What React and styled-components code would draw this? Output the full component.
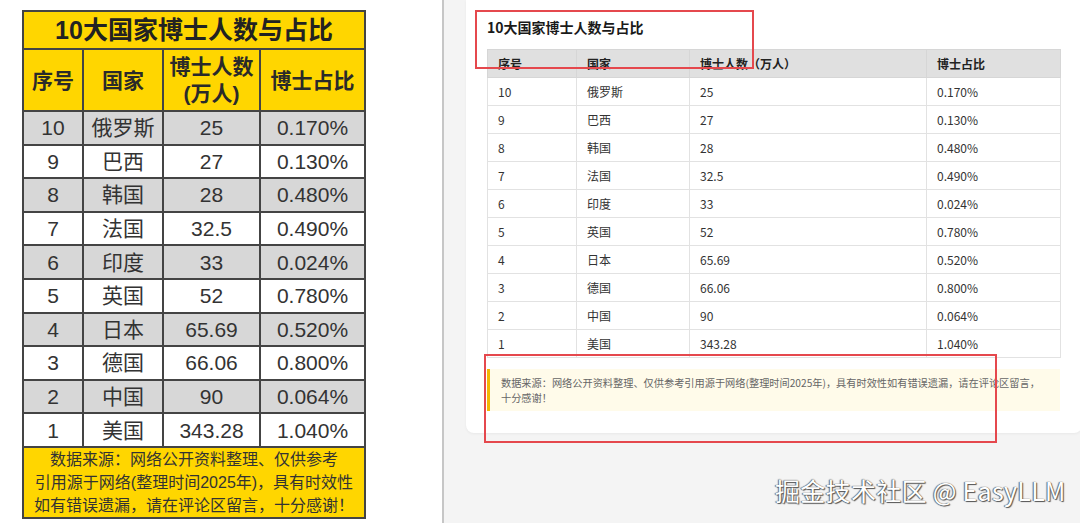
import styled, { createGlobalStyle } from "styled-components";

const GlobalStyle = createGlobalStyle`
  html, body {
    margin: 0;
    padding: 0;
  }
  body {
    font-family: "Noto Sans CJK SC", sans-serif;
    background: #f4f4f4;
  }
`;

const rows = [
  { rank: 10, country: "俄罗斯", count: "25", ratio: "0.170%" },
  { rank: 9, country: "巴西", count: "27", ratio: "0.130%" },
  { rank: 8, country: "韩国", count: "28", ratio: "0.480%" },
  { rank: 7, country: "法国", count: "32.5", ratio: "0.490%" },
  { rank: 6, country: "印度", count: "33", ratio: "0.024%" },
  { rank: 5, country: "英国", count: "52", ratio: "0.780%" },
  { rank: 4, country: "日本", count: "65.69", ratio: "0.520%" },
  { rank: 3, country: "德国", count: "66.06", ratio: "0.800%" },
  { rank: 2, country: "中国", count: "90", ratio: "0.064%" },
  { rank: 1, country: "美国", count: "343.28", ratio: "1.040%" },
];

const Page = styled.div`
  position: relative;
  display: flex;
  width: 1080px;
  height: 523px;
  overflow: hidden;
`;

/* left: the yellow poster image */
const PosterPane = styled.div`
  flex: none;
  width: 444px;
  box-sizing: border-box;
  padding: 10px 0 0 22px;
  background: #fff;
  border-right: 2px solid #c6c6c6;
  box-shadow: 2px 0 3px rgba(0, 0, 0, 0.06);
`;

const Poster = styled.table`
  width: 342px;
  border-collapse: collapse;
  table-layout: fixed;
  font-family: "Liberation Sans", "Noto Sans CJK SC", sans-serif;
  color: #333;
  text-align: center;
  border: 2px solid #3c3c3c;

  td,
  th {
    padding: 0;
    border: 2px solid #444;
  }
`;

const PosterTitle = styled.th`
  height: 36px;
  background: #ffd600;
  font-size: 25px;
  font-weight: 700;
  color: #222;
  line-height: 1;
`;

const PosterHead = styled.th`
  height: 60px;
  background: #ffd600;
  font-size: 21px;
  font-weight: 700;
  color: #2a2a2a;
  line-height: 27px;
`;

const PosterRow = styled.tr`
  background: ${(p) => (p.$shaded ? "#d7d7d7" : "#fff")};
`;

const PosterCell = styled.td`
  height: 31.6px;
  font-size: 21px;
  line-height: 1;
`;

const PosterNote = styled.td`
  height: 69px;
  background: #ffd600;
  font-size: 16px;
  line-height: 23px;
  color: #333;
`;

/* right: the web page screenshot */
const BrowserPane = styled.div`
  flex: 1;
  padding-left: 22px;
  background: #f4f4f4;
`;

const Card = styled.div`
  width: 616px;
  box-sizing: border-box;
  padding: 17px 22px 22px 21px;
  background: #fff;
  border-radius: 0 0 8px 8px;
  box-shadow: 0 1px 3px rgba(0, 0, 0, 0.05);
`;

const CardTitle = styled.h3`
  margin: 0 0 12px;
  font-size: 14px;
  line-height: 20px;
  font-weight: 700;
  color: #1a1a1a;
`;

const DataTable = styled.table`
  width: 573px;
  border-collapse: collapse;
  table-layout: fixed;
  font-size: 12px;
  color: #333;
  text-align: left;
  border: 1px solid #dadada;

  th,
  td {
    height: 27px;
    padding: 0 0 0 10px;
    border: 1px solid #e2e2e2;
  }

  th {
    background: #e0e0e0;
    font-weight: 700;
    color: #222;
    border-color: #d6d6d6;
  }
`;

const Note = styled.div`
  margin-top: 11px;
  padding: 6px 10px 5px 11px;
  border-left: 3px solid #f2b705;
  background: #fffbea;
  font-size: 10.2px;
  line-height: 15.3px;
  color: #666;
`;

const Annotation = styled.div`
  position: absolute;
  left: ${(p) => p.$x}px;
  top: ${(p) => p.$y}px;
  width: ${(p) => p.$w}px;
  height: ${(p) => p.$h}px;
  box-sizing: border-box;
  border: 2px solid #e5484d;
`;

const Watermark = styled.div`
  position: absolute;
  left: 775px;
  top: 474px;
  font-size: 25px;
  line-height: 32px;
  color: #fff;
  letter-spacing: 0.3px;
  text-shadow: 0 0 1px #444, 1px 1px 1px #555, -1px 0 1px #777;
`;

export default function App() {
  return (
    <>
      <GlobalStyle />
      <Page>
        <PosterPane>
          <Poster>
            <colgroup>
              <col style={{ width: 60 }} />
              <col style={{ width: 80 }} />
              <col style={{ width: 97 }} />
              <col style={{ width: 105 }} />
            </colgroup>
            <thead>
              <tr>
                <PosterTitle colSpan={4}>10大国家博士人数与占比</PosterTitle>
              </tr>
              <tr>
                <PosterHead>序号</PosterHead>
                <PosterHead>国家</PosterHead>
                <PosterHead>
                  博士人数
                  <br />
                  (万人)
                </PosterHead>
                <PosterHead>博士占比</PosterHead>
              </tr>
            </thead>
            <tbody>
              {rows.map((r, i) => (
                <PosterRow key={r.rank} $shaded={i % 2 === 0}>
                  <PosterCell>{r.rank}</PosterCell>
                  <PosterCell>{r.country}</PosterCell>
                  <PosterCell>{r.count}</PosterCell>
                  <PosterCell>{r.ratio}</PosterCell>
                </PosterRow>
              ))}
              <tr>
                <PosterNote colSpan={4}>
                  数据来源：网络公开资料整理、仅供参考
                  <br />
                  引用源于网络(整理时间2025年)，具有时效性
                  <br />
                  如有错误遗漏，请在评论区留言，十分感谢！
                </PosterNote>
              </tr>
            </tbody>
          </Poster>
        </PosterPane>

        <BrowserPane>
          <Card>
            <CardTitle>10大国家博士人数与占比</CardTitle>
            <DataTable>
              <colgroup>
                <col style={{ width: 89 }} />
                <col style={{ width: 113 }} />
                <col style={{ width: 237 }} />
                <col style={{ width: 134 }} />
              </colgroup>
              <thead>
                <tr>
                  <th>序号</th>
                  <th>国家</th>
                  <th>博士人数（万人）</th>
                  <th>博士占比</th>
                </tr>
              </thead>
              <tbody>
                {rows.map((r) => (
                  <tr key={r.rank}>
                    <td>{r.rank}</td>
                    <td>{r.country}</td>
                    <td>{r.count}</td>
                    <td>{r.ratio}</td>
                  </tr>
                ))}
              </tbody>
            </DataTable>
            <Note>
              数据来源：网络公开资料整理、仅供参考引用源于网络(整理时间2025年)，具有时效性如有错误遗漏，请在评论区留言，十分感谢！
            </Note>
          </Card>
        </BrowserPane>

        <Annotation $x={475} $y={10} $w={279} $h={59} />
        <Annotation $x={484} $y={354} $w={513} $h={89} />
        <Watermark>掘金技术社区 @ EasyLLM</Watermark>
      </Page>
    </>
  );
}
